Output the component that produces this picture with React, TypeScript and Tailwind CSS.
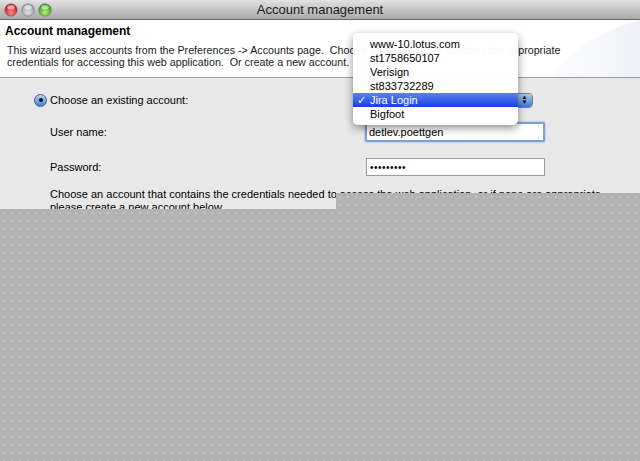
import React from "react";

const font = { fontFamily: '"Liberation Sans", Arial, sans-serif' };

function Light({ from, to }: { from: string; to: string }) {
  return (
    <svg width="14" height="14" viewBox="0 0 14 14">
      <defs>
        <radialGradient id={"g" + from.slice(1) + to.slice(1)} cx="50%" cy="70%" r="60%">
          <stop offset="0%" stopColor={from} />
          <stop offset="100%" stopColor={to} />
        </radialGradient>
      </defs>
      <circle cx="7" cy="7" r="6.2" fill={`url(#g${from.slice(1) + to.slice(1)})`} stroke="#6b6b6b" strokeWidth="0.6" />
      <ellipse cx="7" cy="4.2" rx="3.6" ry="2.2" fill="white" opacity="0.55" />
    </svg>
  );
}

export default function App() {
  const items = ["www-10.lotus.com", "st1758650107", "Verisign", "st833732289", "Jira Login", "Bigfoot"];
  return (
    <div className="relative w-[640px] h-[461px] overflow-hidden bg-[#e8e8e8] text-[11px] text-black" style={font}>
      {/* title bar */}
      <div className="relative h-[20px] flex items-center bg-gradient-to-b from-[#e2e2e2] to-[#a9a9a9] border-b border-[#6a6a6a]">
        <div className="flex items-center gap-[3px] pl-[4px]">
          <Light from="#ff8b8b" to="#c8101a" />
          <Light from="#dcdcdc" to="#a4a4a4" />
          <Light from="#b9ef7a" to="#3c9a12" />
        </div>
        <div className="absolute inset-0 flex items-center justify-center text-[13px] text-[#1a1a1a]">Account management</div>
      </div>

      {/* header */}
      <div className="relative h-[58px] bg-white border-b border-[#9d9d9d] overflow-hidden">
        <svg className="absolute right-0 top-0" width="130" height="58" viewBox="0 0 130 58">
          <defs>
            <linearGradient id="sw" x1="0" y1="0" x2="1" y2="0">
              <stop offset="0%" stopColor="#ffffff" />
              <stop offset="100%" stopColor="#cfd7ef" />
            </linearGradient>
          </defs>
          <ellipse cx="175" cy="110" rx="150" ry="115" fill="url(#sw)" />
        </svg>
        <div className="relative pl-[5px] pt-[4px]">
          <div className="font-bold text-[12px] leading-[15px]">Account management</div>
          <div className="pl-[2px] pt-[5px] leading-[12px] text-[#1a1a1a] text-[10.7px]">
            <div className="whitespace-nowrap">This wizard uses accounts from the Preferences -&gt; Accounts page.&nbsp; Choose an account that contains the appropriate</div>
            <div className="whitespace-nowrap">credentials for accessing this web application.&nbsp; Or create a new account.</div>
          </div>
        </div>
      </div>

      {/* body */}
      <div className="pl-[34px] pt-[14px]">
        <div className="flex items-center h-[16px]">
          <span className="w-[13px] h-[13px] rounded-full border border-[#3b5d9a] bg-gradient-to-b from-[#bcd6f6] to-[#3d7fd6] flex items-center justify-center">
            <span className="w-[4px] h-[4px] rounded-full bg-[#111]" />
          </span>
          <span className="ml-[3px] w-[315px]">Choose an existing account:</span>
          <div className="w-[168px] h-[15px] rounded-[4px] border border-[#7d7d7d] bg-white flex justify-end overflow-hidden">
            <span className="w-[15px] h-full bg-gradient-to-b from-[#a9c8f0] to-[#3a78d4] flex flex-col items-center justify-center text-[6px] leading-[5px] text-black">
              <span>▲</span>
              <span>▼</span>
            </span>
          </div>
        </div>

        <div className="flex items-center mt-[14px] pl-[16px]">
          <span className="w-[315px]">User name:</span>
          <div className="w-[180px] h-[20px] rounded-[2px] border-[2px] border-[#7ea1d6] bg-white flex items-center px-[2px] shadow-[0_0_2px_#6a9ee0]">
            detlev.poettgen
          </div>
        </div>

        <div className="flex items-center mt-[16px] pl-[16px]">
          <span className="w-[316px]">Password:</span>
          <div className="w-[179px] h-[18px] border border-[#9a9a9a] bg-white flex items-center px-[3px] text-[10px] tracking-[0.5px]">
            •••••••••
          </div>
        </div>

        <div className="pl-[16px] pt-[12px] leading-[13px]">
          <div className="whitespace-nowrap">Choose an account that contains the credentials needed to access the web application, or if none are appropriate,</div>
          <div>please create a new account below.</div>
        </div>
      </div>

      {/* gray overlay (unpainted area) */}
      <div className="absolute left-[336px] right-0 top-[193px] h-[16px] bg-[#b3b3b3] bg-[radial-gradient(circle,#cacaca_0.6px,transparent_1px)] bg-[length:8px_8px]" />
      <div className="absolute left-0 right-0 top-[209px] bottom-0 bg-[#b3b3b3] bg-[radial-gradient(circle,#cacaca_0.6px,transparent_1px)] bg-[length:8px_8px]" />

      {/* popup menu */}
      <div className="absolute left-[353px] top-[33px] w-[165px] bg-white/[0.97] rounded-[5px] shadow-[0_3px_9px_rgba(0,0,0,0.45)] py-[4px] text-[11px]">
        {items.map((it) => {
          const sel = it === "Jira Login";
          return (
            <div
              key={it}
              className={
                "h-[14px] flex items-center pl-[17px] relative " +
                (sel ? "bg-gradient-to-b from-[#5c7ff2] to-[#1a3fe0] text-white" : "")
              }
            >
              {sel && <span className="absolute left-[4px]">✓</span>}
              {it}
            </div>
          );
        })}
      </div>
    </div>
  );
}
